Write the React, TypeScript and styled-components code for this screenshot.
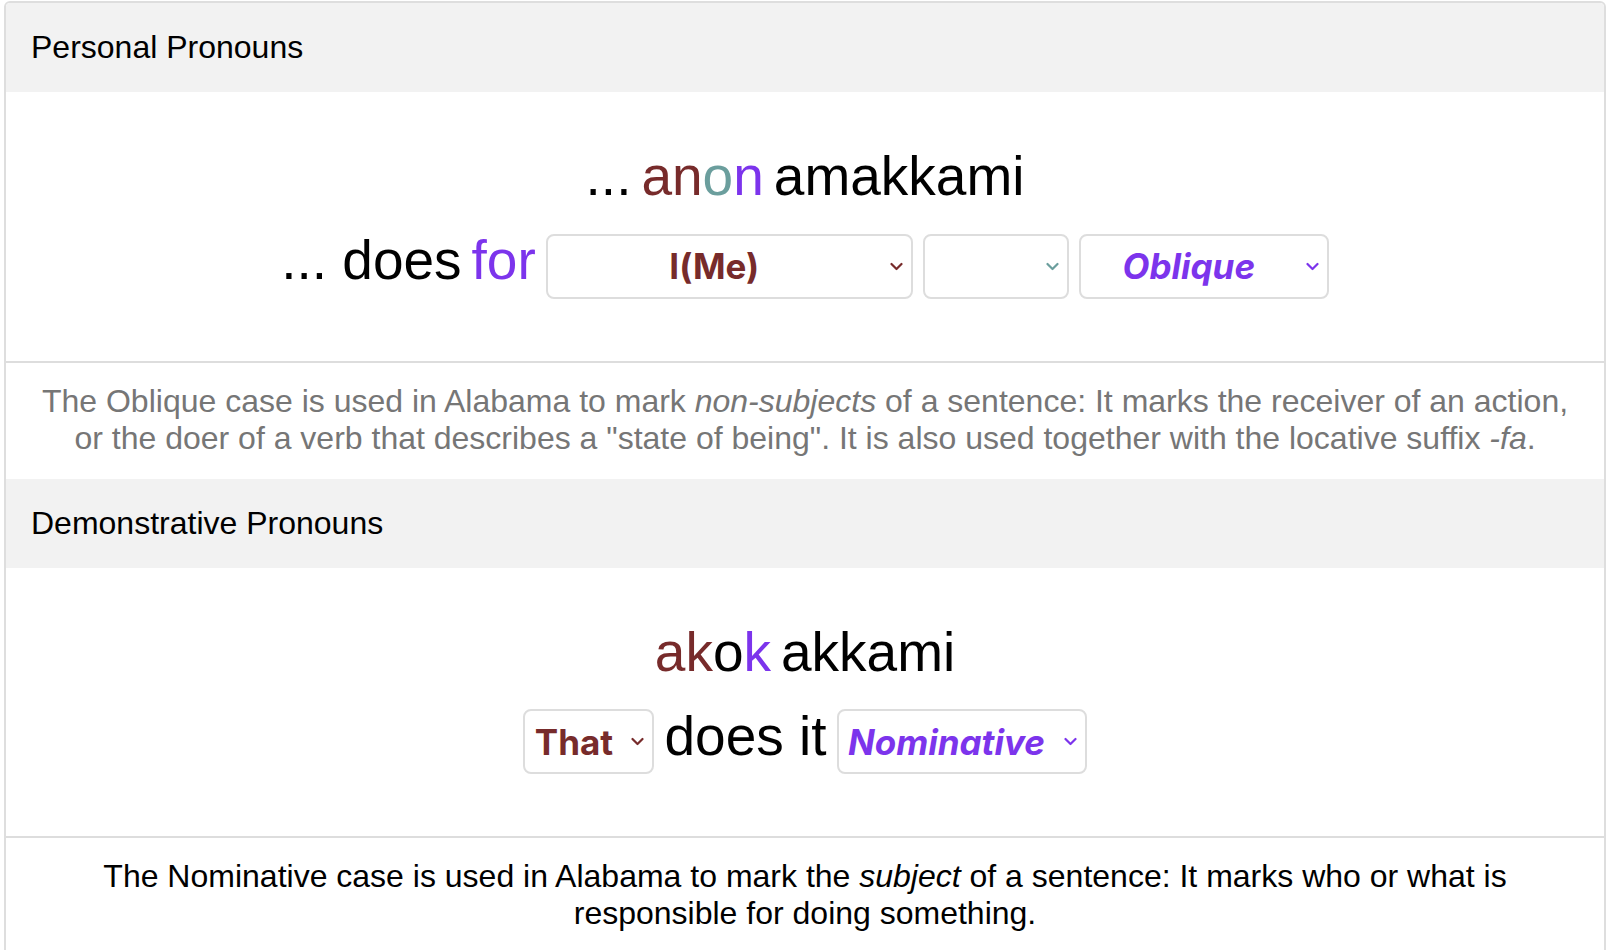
import React from "react";
import styled, { createGlobalStyle } from "styled-components";

const GlobalStyle = createGlobalStyle`
  html, body {
    margin: 0;
    padding: 0;
    background: #ffffff;
  }
  body {
    font-family: "Liberation Sans", Arial, Helvetica, sans-serif;
    color: #000000;
  }
`;

const BROWN = "#772b2b";
const TEAL = "#6b9e9d";
const PURPLE = "#7c34ec";

const Page = styled.div`
  padding: 1px 2px 0 4px;
`;

const Card = styled.div`
  border: 2px solid #dedede;
  border-radius: 6px;
  overflow: hidden;
  background: #ffffff;
`;

const SectionHeader = styled.div`
  height: 89px;
  background: #f2f2f2;
  display: flex;
  align-items: center;
  padding: 0 25px;
  font-size: 32px;
  color: #000000;
`;

const Stage = styled.div`
  display: flex;
  flex-direction: column;
  align-items: center;
  gap: 20px;
  padding: 52px 0 62px;
`;

const Line = styled.div`
  display: flex;
  align-items: baseline;
  justify-content: center;
  gap: 10px;
  font-size: 55px;
  line-height: normal;
`;

const Word = styled.span<{ $color?: string }>`
  color: ${(p) => p.$color ?? "#000000"};
  white-space: pre;
`;

const SelectBox = styled.div<{ $w: number }>`
  width: ${(p) => p.$w}px;
  height: 65px;
  box-sizing: border-box;
  border: 2px solid #dddddd;
  border-radius: 8px;
  background: #ffffff;
  display: flex;
  align-items: center;
  gap: 13px;
  padding: 0 8px 0 4px;
`;

const SelectLabel = styled.span<{ $color: string; $italic?: boolean }>`
  flex: 1;
  text-align: center;
  font-family: Inter, "Liberation Sans", Arial, sans-serif;
  font-weight: 700;
  font-size: 35px;
  font-style: ${(p) => (p.$italic ? "italic" : "normal")};
  color: ${(p) => p.$color};
  white-space: pre;
`;

const ChevronSvg = styled.svg`
  flex: none;
  width: 13px;
  height: 9px;
`;

const Description = styled.p<{ $muted?: boolean }>`
  margin: 0;
  border-top: 2px solid #dddddd;
  padding: 20px 20px 22px;
  text-align: center;
  font-size: 32px;
  line-height: normal;
  color: ${(p) => (p.$muted ? "#767676" : "#000000")};
`;

const Chevron: React.FC<{ color: string }> = ({ color }) => (
  <ChevronSvg viewBox="0 0 13 9" aria-hidden="true">
    <polyline
      points="1.5,2 6.5,7 11.5,2"
      fill="none"
      stroke={color}
      strokeWidth="2.2"
      strokeLinecap="round"
      strokeLinejoin="round"
    />
  </ChevronSvg>
);

const Select: React.FC<{
  width: number;
  value: string;
  color: string;
  italic?: boolean;
}> = ({ width, value, color, italic }) => (
  <SelectBox $w={width}>
    <SelectLabel $color={color} $italic={italic}>
      {value || "\u00a0"}
    </SelectLabel>
    <Chevron color={color} />
  </SelectBox>
);

export default function App() {
  return (
    <>
      <GlobalStyle />
      <Page>
        <Card>
          <SectionHeader>Personal Pronouns</SectionHeader>
          <Stage>
            <Line>
              <Word>...</Word>
              <Word>
                <Word $color={BROWN}>an</Word>
                <Word $color={TEAL}>o</Word>
                <Word $color={PURPLE}>n</Word>
              </Word>
              <Word>amakkami</Word>
            </Line>
            <Line>
              <Word>... does</Word>
              <Word $color={PURPLE}>for</Word>
              <Select width={367} value="I(Me)" color={BROWN} />
              <Select width={146} value="" color={TEAL} />
              <Select width={250} value="Oblique" color={PURPLE} italic />
            </Line>
          </Stage>
          <Description $muted>
            The Oblique case is used in Alabama to mark <em>non-subjects</em> of
            a sentence: It marks the receiver of an action, or the doer of a
            verb that describes a "state of being". It is also used together
            with the locative suffix <em>-fa</em>.
          </Description>

          <SectionHeader>Demonstrative Pronouns</SectionHeader>
          <Stage>
            <Line>
              <Word>
                <Word $color={BROWN}>ak</Word>
                <Word>o</Word>
                <Word $color={PURPLE}>k</Word>
              </Word>
              <Word>akkami</Word>
            </Line>
            <Line>
              <Select width={131} value="That" color={BROWN} />
              <Word>does it</Word>
              <Select width={250} value="Nominative" color={PURPLE} italic />
            </Line>
          </Stage>
          <Description>
            The Nominative case is used in Alabama to mark the <em>subject</em>{" "}
            of a sentence: It marks who or what is responsible for doing
            something.
          </Description>
        </Card>
      </Page>
    </>
  );
}
